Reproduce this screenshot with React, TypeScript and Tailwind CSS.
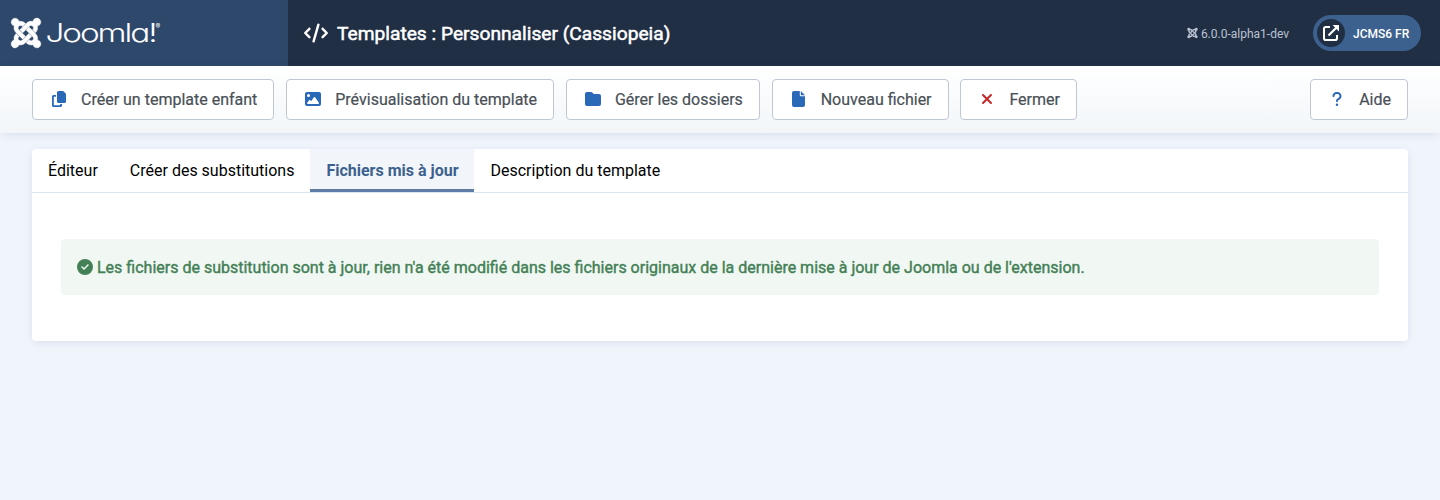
import type { ReactNode } from 'react';
import { FaCode, FaImage, FaFolder, FaXmark, FaQuestion, FaCircleCheck, FaJoomla } from 'react-icons/fa6';

function ToolbarButton({ icon, label }: { icon: ReactNode; label: string }) {
  return (
    <button className="flex h-[41px] items-center rounded border border-[#bfc7d6] bg-white pr-4 text-base text-[#495057]">
      <span className="mb-px flex w-12 items-center justify-center pl-1 text-[#2a69b8]">{icon}</span>
      <span className="whitespace-nowrap [-webkit-text-stroke:0.2px_#495057]">{label}</span>
    </button>
  );
}

function CopyIcon() {
  return (
    <svg viewBox="0 0 14 16" className="h-4 w-3.5" fill="currentColor">
      <path d="M6.5 0H11.2L14 2.8V10.5A1.5 1.5 0 0 1 12.5 12H6.5A1.5 1.5 0 0 1 5 10.5V1.5A1.5 1.5 0 0 1 6.5 0Z" />
      <path d="M1.5 4H4V5.8H1.8V14.2H8.2V13H10V14.5A1.5 1.5 0 0 1 8.5 16H1.5A1.5 1.5 0 0 1 0 14.5V5.5A1.5 1.5 0 0 1 1.5 4Z" />
    </svg>
  );
}

function FileIcon() {
  return (
    <svg viewBox="0 0 13 16" className="h-4 w-[13px]" fill="currentColor">
      <path d="M2 0H7.8V4.2A1 1 0 0 0 8.8 5.2H13V14A2 2 0 0 1 11 16H2A2 2 0 0 1 0 14V2A2 2 0 0 1 2 0Z" />
      <path d="M8.8 0L13 4.2H8.8Z" />
    </svg>
  );
}

function ExternalIcon() {
  return (
    <svg viewBox="0 0 18 18" className="h-[18px] w-[18px]" fill="none" stroke="currentColor" strokeWidth="2">
      <path d="M8 3H3.8Q2 3 2 4.8V14.2Q2 16 3.8 16H13.2Q15 16 15 14.2V11" />
      <path d="M6.5 11.5L14.5 3.5" strokeWidth="2.2" />
      <path d="M10.6 1H17V7.4Z" fill="currentColor" stroke="none" />
    </svg>
  );
}

const tabs = ['Éditeur', 'Créer des substitutions', 'Fichiers mis à jour', 'Description du template'];

export default function App() {
  return (
    <div className="flex h-[500px] w-[1440px] flex-col overflow-hidden bg-[#f0f4fb] font-[Roboto,sans-serif]">
      <header className="flex h-[66px] shrink-0 items-center bg-[#212f45] text-white">
        <div className="flex h-full w-72 items-center bg-[#2e486b] pl-[11px]">
          <FaJoomla className="h-[34px] w-[30px] overflow-visible" stroke="currentColor" strokeWidth="6" />
          <svg viewBox="0 0 120 34" className="ml-1 h-[34px] w-[120px]" fill="currentColor">
            <text
              x="0.5"
              y="26"
              fontFamily="Inter, sans-serif"
              fontWeight="300"
              fontSize="25.5"
              letterSpacing="-1.6"
              textLength="110"
              lengthAdjust="spacingAndGlyphs"
              className="[font-feature-settings:'cv11']"
            >
              Joomla!
            </text>
            <text x="110.5" y="12.5" fontFamily="Inter, sans-serif" fontSize="7">
              ®
            </text>
          </svg>
        </div>
        <FaCode className="ml-4 h-5 w-6" />
        <h1 className="mt-px ml-[9px] text-[19.2px] leading-6 font-normal [-webkit-text-stroke:0.5px_white]">
          Templates : Personnaliser (Cassiopeia)
        </h1>
        <div className="mr-[19px] ml-auto flex items-center">
          <FaJoomla className="h-3 w-[11px] text-[#b9c3d1]" />
          <span className="mt-px ml-[3px] text-xs text-[#b9c3d1]">6.0.0-alpha1-dev</span>
          <div className="ml-6 flex h-9 w-[108px] items-center rounded-full bg-[#3d618f] pl-1">
            <span className="flex size-7 items-center justify-center rounded-full bg-[#212f45]">
              <ExternalIcon />
            </span>
            <span className="mt-px ml-2 text-xs font-medium">JCMS6 FR</span>
          </div>
        </div>
      </header>

      <div className="flex h-[67px] shrink-0 items-center gap-[11.9px] bg-linear-to-b from-white to-[#f2f6f9] px-8 shadow-[0_2px_10px_-2px_#1a3a8026]">
        <ToolbarButton icon={<CopyIcon />} label="Créer un template enfant" />
        <ToolbarButton icon={<FaImage className="size-4" />} label="Prévisualisation du template" />
        <ToolbarButton icon={<FaFolder className="size-4" />} label="Gérer les dossiers" />
        <ToolbarButton icon={<FileIcon />} label="Nouveau fichier" />
        <ToolbarButton icon={<FaXmark className="h-4 w-3 text-[#c52827]" />} label="Fermer" />
        <div className="ml-auto">
          <ToolbarButton icon={<FaQuestion className="h-4 w-3" />} label="Aide" />
        </div>
      </div>

      <main className="mx-8 mt-4 h-48 shrink-0 rounded bg-white shadow-[0_2px_10px_-2px_#1a3a8026]">
        <nav className="flex h-11 rounded-t border-b border-[#dbe4f0]">
          {tabs.map((tab, i) => (
            <button
              key={tab}
              className={
                i === 2
                  ? 'w-[164px] bg-[#f2f6fa] text-base font-bold whitespace-nowrap text-[#3d618f] shadow-[inset_0_-3px_0_#5e7da6]'
                  : 'px-4 text-base whitespace-nowrap text-black'
              }
            >
              {tab}
            </button>
          ))}
        </nav>
        <div className="mx-[29px] mt-[46px] flex h-14 items-center rounded bg-[#f1f8f4] px-4 text-base text-[#448055]">
          <FaCircleCheck className="mr-1 size-4" />
          <span className="mt-px whitespace-nowrap [-webkit-text-stroke:0.4px_#448055]">
            Les fichiers de substitution sont à jour, rien n'a été modifié dans les fichiers originaux de la dernière mise à jour de Joomla ou de l'extension.
          </span>
        </div>
      </main>
    </div>
  );
}
